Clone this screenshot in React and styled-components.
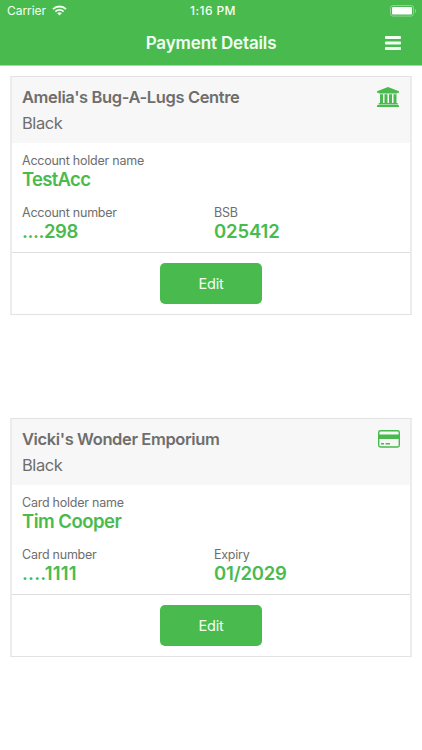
import React from "react";
import styled, { createGlobalStyle } from "styled-components";

const green = "#49bb4e";
const grey = "#6e6e6e";

const GlobalStyle = createGlobalStyle`
  * {
    box-sizing: border-box;
  }
  body {
    margin: 0;
    background: #ffffff;
    font-family: Inter, "Liberation Sans", sans-serif;
    color: ${grey};
  }
`;

const Screen = styled.div`
  display: flex;
  flex-direction: column;
  height: 750px;
  overflow: hidden;
`;

const Top = styled.header`
  height: 66px;
  background: ${green};
  border-bottom: 1px solid #9be29f;
  color: #f4fff4;
`;

const StatusBar = styled.div`
  display: grid;
  grid-template-columns: 1fr auto 1fr;
  align-items: center;
  height: 22px;
  padding: 0 5px 0 7px;
  font-size: 12px;
  line-height: 22px;
`;

const Carrier = styled.div`
  display: flex;
  align-items: center;
  gap: 6px;
  letter-spacing: -0.05px;
  > svg {
    margin-bottom: 1px;
  }
`;

const Time = styled.div`
  font-weight: 500;
  letter-spacing: 0.4px;
  padding-left: 2px;
`;

const Battery = styled.svg`
  display: block;
  justify-self: end;
  margin-bottom: 1px;
`;

const NavBar = styled.div`
  display: grid;
  grid-template-columns: 1fr auto 1fr;
  align-items: center;
  height: 43px;
  padding-right: 21px;
  > svg {
    grid-column: 3;
    justify-self: end;
    margin-bottom: 2px;
  }
`;

const NavTitle = styled.h1`
  grid-column: 2;
  margin: 0 0 0 21px;
  font-size: 17px;
  font-weight: 600;
  line-height: 43px;
  letter-spacing: -0.14px;
`;

const List = styled.main`
  display: flex;
  flex-direction: column;
  gap: 103px;
  padding: 10px 10px 0;
`;

const Card = styled.section`
  height: 239px;
  border: solid #ececec;
  border-width: 1px 2px;
  border-top-color: #e2e2e2;
  border-bottom-color: #e2e2e2;
`;

const CardHeader = styled.div`
  display: flex;
  justify-content: space-between;
  height: 66px;
  padding: 7px 10px 0;
  background: #f7f7f7;
  > svg {
    margin-top: 1px;
  }
`;

const CardTitle = styled.h2`
  margin: 0;
  font-size: 16.5px;
  font-weight: 600;
  line-height: 26px;
  letter-spacing: -0.38px;
`;

const Plan = styled.p`
  margin: 0;
  font-size: 16.5px;
  line-height: 27px;
  letter-spacing: -0.45px;
`;

const CardBody = styled.div`
  display: grid;
  grid-template-columns: 192px 1fr;
  row-gap: 16px;
  height: 110px;
  padding: 9px 10px 0;
  align-content: start;
  border-bottom: 1px solid #dedede;
`;

const Field = styled.div`
  grid-column: ${props => (props.$wide ? "1 / -1" : "auto")};
`;

const Label = styled.div`
  font-size: 12.5px;
  line-height: 18px;
  letter-spacing: -0.24px;
`;

const Value = styled.div`
  color: ${green};
  font-size: 18.5px;
  font-weight: 600;
  line-height: 18px;
  letter-spacing: ${props => props.$spacing || "0"};
`;

const CardFooter = styled.div`
  display: flex;
  justify-content: center;
  padding-top: 10px;
`;

const EditButton = styled.button`
  width: 102px;
  height: 41px;
  padding: 0;
  border: 0;
  border-radius: 5px;
  background: ${green};
  color: #f4fff4;
  font-family: inherit;
  font-size: 14.5px;
  line-height: 41px;
  letter-spacing: -0.2px;
`;

const WifiIcon = () => (
  <svg width="15" height="11" viewBox="0 0 15 11" fill="none" stroke="currentColor">
    <path d="M1 4.1a9.3 9.3 0 0 1 13 0" strokeWidth="1.9" />
    <path d="M3.4 6.6a5.8 5.8 0 0 1 8.2 0" strokeWidth="1.8" />
    <path d="M7.5 10.6 5.2 8.3a3.3 3.3 0 0 1 4.6 0z" fill="currentColor" stroke="none" />
  </svg>
);

const BatteryIcon = () => (
  <Battery width="27" height="12" viewBox="0 0 27 12">
    <rect x="0.5" y="0.5" width="23" height="10.6" rx="2.4" fill="none" stroke="#8fd592" />
    <rect x="2" y="2" width="20" height="7.6" rx="1" fill="#ffffff" />
    <path d="M25 4v4c1.6-.6 1.6-3.4 0-4z" fill="#8fd592" />
  </Battery>
);

const MenuIcon = () => (
  <svg width="16" height="14" viewBox="0 0 16 14" fill="currentColor">
    <rect y="0" width="16" height="3" rx="0.8" />
    <rect y="5.5" width="16" height="3" rx="0.8" />
    <rect y="11" width="16" height="3" rx="0.8" />
  </svg>
);

const BankIcon = () => (
  <svg width="24" height="24" viewBox="0 0 24 24" fill={green}>
    <path d="M12 2 23 6.2v1.5h-1.5c0 .4-.35.7-.8.7H3.3c-.45 0-.8-.3-.8-.7H1V6.200z" />
    <path d="M4 9.200h3v8.900h1.500V9.200h3v8.900H13V9.200h3v8.900h1.500V9.200h3v8.900h.6c.4 0 .8.300.8.700v.6H2.500v-.6c0-.4.400-.7.800-.7H4z" />
    <path d="M1.900 20h20.200c.5 0 .9.300.9.700V22H1v-1.300c0-.4.400-.7.900-.7z" />
  </svg>
);

const CardIcon = () => (
  <svg width="24" height="24" viewBox="0 0 24 24" fill={green}>
    <rect x="2.7" y="3.7" width="20.6" height="16.3" rx="1.7" fill="none" stroke={green} strokeWidth="1.4" />
    <rect x="2.7" y="7.500" width="20.6" height="4.5" />
    <rect x="5" y="16" width="3" height="1.5" />
    <rect x="9.5" y="16" width="4.5" height="1.5" />
  </svg>
);

const accounts = [
  {
    name: "Amelia's Bug-A-Lugs Centre",
    plan: "Black",
    icon: <BankIcon />,
    holder: ["Account holder name", "TestAcc", "-0.7px"],
    number: ["Account number", "....298", "-0.4px"],
    extra: ["BSB", "025412", "-0.15px"]
  },
  {
    name: "Vicki's Wonder Emporium",
    plan: "Black",
    icon: <CardIcon />,
    holder: ["Card holder name", "Tim Cooper", "-0.5px"],
    number: ["Card number", "....1111", "0.2px"],
    extra: ["Expiry", "01/2029", "-0.2px"]
  }
];

const CardField = ({ field, wide }) => (
  <Field $wide={wide}>
    <Label>{field[0]}</Label>
    <Value $spacing={field[2]}>{field[1]}</Value>
  </Field>
);

const PaymentCard = ({ account }) => (
  <Card>
    <CardHeader>
      <div>
        <CardTitle>{account.name}</CardTitle>
        <Plan>{account.plan}</Plan>
      </div>
      {account.icon}
    </CardHeader>
    <CardBody>
      <CardField field={account.holder} wide />
      <CardField field={account.number} />
      <CardField field={account.extra} />
    </CardBody>
    <CardFooter>
      <EditButton>Edit</EditButton>
    </CardFooter>
  </Card>
);

const App = () => (
  <Screen>
    <GlobalStyle />
    <Top>
      <StatusBar>
        <Carrier>
          Carrier
          <WifiIcon />
        </Carrier>
        <Time>1:16 PM</Time>
        <BatteryIcon />
      </StatusBar>
      <NavBar>
        <NavTitle>Payment Details</NavTitle>
        <MenuIcon />
      </NavBar>
    </Top>
    <List>
      {accounts.map(account => (
        <PaymentCard key={account.name} account={account} />
      ))}
    </List>
  </Screen>
);

export default App;
